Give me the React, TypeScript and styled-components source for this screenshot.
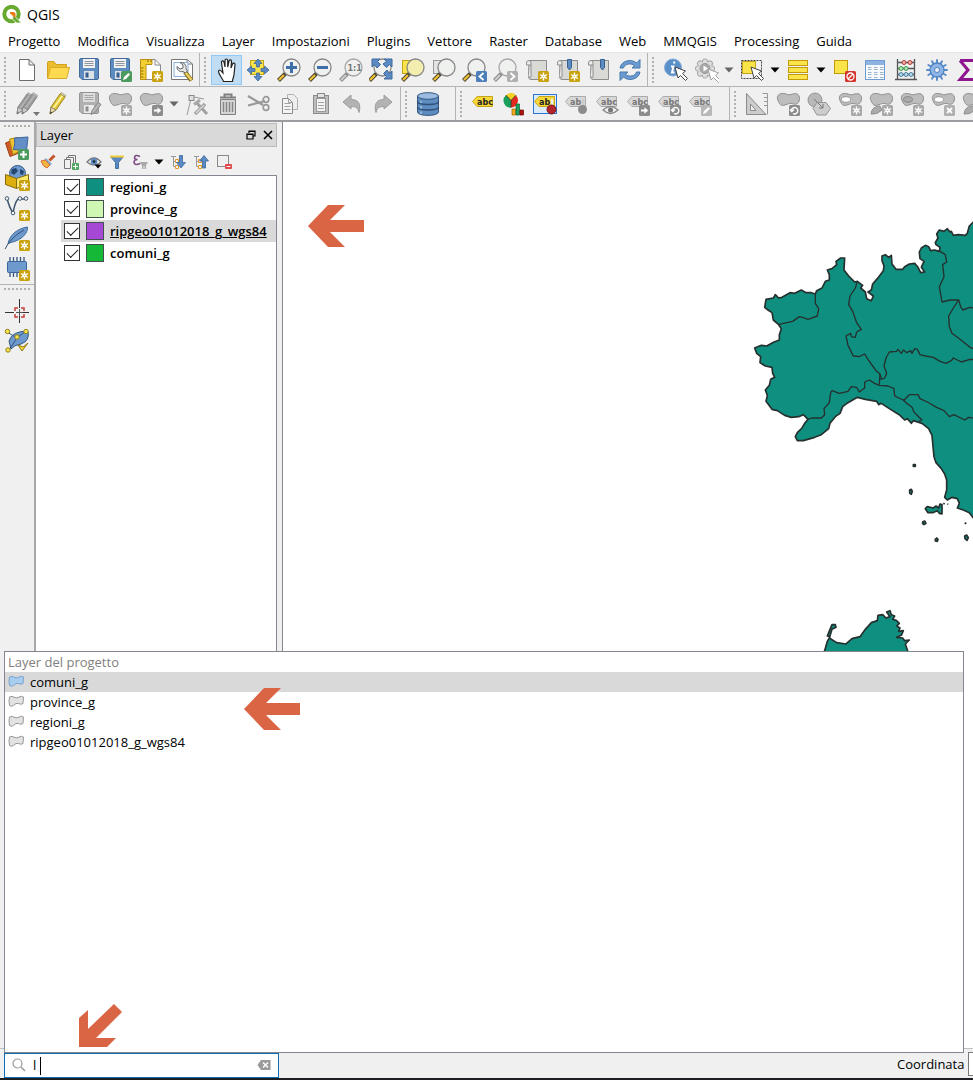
import React from "react";
import styled, { createGlobalStyle, css } from "styled-components";

const GlobalStyle = createGlobalStyle`
  * { box-sizing: border-box; }
  html, body { margin: 0; padding: 0; overflow: hidden; }
  body, button, input { font-family: "Open Sans", "Noto Sans", sans-serif; font-size: 13px; color: #000; }
  button { border: 0; padding: 0; margin: 0; background: none; }
  svg { display: block; flex: none; }
`;

const chrome = "#f0f0f0";
const line = "#b4b4b4";
const frame = "#828790";

const Window = styled.div`
  display: flex;
  flex-direction: column;
  height: 100vh;
  background: ${chrome};
  border-bottom: 2px solid #1e1e22;
`;

const TitleBar = styled.header`
  display: flex;
  align-items: center;
  gap: 5px;
  height: 30px;
  padding-left: 2px;
  background: #fff;
`;

const AppTitle = styled.h1`
  margin: 0;
  font-size: 14px;
  font-weight: 400;
  line-height: 18px;
`;

const MenuBar = styled.nav`
  display: flex;
  align-items: center;
  gap: 17px;
  height: 23px;
  padding-left: 8px;
  background: #fff;
  border-bottom: 1px solid #e6e6e6;
`;

const MenuButton = styled.button`
  line-height: 20px;
  white-space: nowrap;
`;

const ToolRow = styled.div<{ $last?: boolean }>`
  display: flex;
  flex: none;
  height: ${(p) => (p.$last ? 35 : 34)}px;
  overflow: hidden;
  border-bottom: ${(p) => (p.$last ? "2px solid #9c9ca0" : `1px solid ${line}`)};
`;

const ToolGroup = styled.div<{ $tail?: number }>`
  display: flex;
  flex: none;
  align-items: center;
  padding-right: ${(p) => p.$tail ?? 2}px;
  border-right: 1px solid ${line};
`;

const Grip = styled.span<{ $flat?: boolean }>`
  flex: none;
  ${(p) =>
    p.$flat
      ? css`
          width: 26px;
          height: 2px;
          margin: 3px 0 6px;
          background: repeating-linear-gradient(90deg, #b0b0b0 0 2px, transparent 2px 4px);
        `
      : css`
          width: 2px;
          height: 26px;
          margin: 0 5px 0 4px;
          background: repeating-linear-gradient(180deg, #b0b0b0 0 2px, transparent 2px 4px);
        `}
`;

const ToolButton = styled.button<{ $active?: boolean }>`
  display: flex;
  align-items: center;
  justify-content: center;
  flex: none;
  width: 31px;
  height: 30px;
  ${(p) => p.$active && "background: #c0dcf3; box-shadow: inset 0 0 0 1px #90c8f6;"}
`;

const ArrowButton = styled(ToolButton)`
  width: 15px;
`;

const Workspace = styled.main`
  display: flex;
  flex: 1;
  min-height: 0;
  border-bottom: 1px solid #c0c0c0;
`;

const SideBar = styled.aside`
  display: flex;
  flex-direction: column;
  align-items: center;
  flex: none;
  width: 36px;
  border-right: 2px solid #a8a8ac;
`;

const SideSection = styled.div`
  display: flex;
  flex-direction: column;
  align-items: center;
  width: 100%;
  padding-bottom: 1px;
  border-bottom: 1px solid ${line};
  &:last-child { border-bottom: 0; }
`;

const LayerPanel = styled.section`
  display: flex;
  flex-direction: column;
  flex: none;
  width: 241px;
  margin-right: 5px;
`;

const PanelTitle = styled.header`
  display: flex;
  align-items: center;
  height: 24px;
  margin-top: 1px;
  padding-left: 3px;
  background: #d9d9d9;
  border: 1px solid #bcbcbc;
`;

const PanelName = styled.h2`
  flex: 1;
  margin: 0;
  font-size: 13px;
  font-weight: 400;
`;

const PanelControl = styled.button`
  display: flex;
  justify-content: center;
  width: 17px;
`;

const PanelTools = styled.div`
  display: flex;
  align-items: center;
  height: 28px;
  padding-top: 1px;
`;

const SmallTool = styled.button<{ $narrow?: boolean }>`
  display: flex;
  justify-content: center;
  flex: none;
  width: ${(p) => (p.$narrow ? 15 : 23)}px;
`;

const LayerTree = styled.ul`
  flex: 1;
  margin: 0;
  padding: 0;
  list-style: none;
  background: #fff;
  border: solid ${frame};
  border-width: 1px 1px 0 0;
`;

const LayerRow = styled.li<{ $selected?: boolean }>`
  display: flex;
  align-items: center;
  height: 22px;
  margin-left: 25px;
  padding-left: 3px;
  background: ${(p) => (p.$selected ? "#d9d9d9" : "transparent")};
  text-decoration: ${(p) => (p.$selected ? "underline" : "none")};
`;

const LayerLabel = styled.label`
  display: flex;
  align-items: center;
  gap: 6px;
  font-size: 13px;
  font-weight: 600;
  white-space: nowrap;
`;

const Check = styled.input`
  appearance: none;
  flex: none;
  width: 16px;
  height: 16px;
  margin: 0;
  border: 1px solid #333;
  background: #fff;
  &:checked::after {
    content: "";
    display: block;
    width: 10px;
    height: 5px;
    margin: 3px 2px;
    border: solid #222;
    border-width: 0 0 1px 1px;
    transform: rotate(-45deg);
  }
`;

const Swatch = styled.span<{ $color: string }>`
  width: 18px;
  height: 18px;
  background: ${(p) => p.$color};
  border: 1px solid #44504e;
`;

const Canvas = styled.section`
  flex: 1;
  min-width: 0;
  overflow: hidden;
  background: #fff;
  border-left: 1px solid ${frame};
`;

const StatusBar = styled.footer`
  display: flex;
  align-items: center;
  justify-content: space-between;
  flex: none;
  height: 29px;
  padding-left: 4px;
`;

const Locator = styled.div`
  position: relative;
  display: flex;
  align-items: center;
  width: 275px;
  height: 25px;
  margin-top: 3px;
  padding: 0 7px;
  background: #fff;
  border: 1px solid #0f6cb6;
`;

const LocatorInput = styled.input`
  flex: 1;
  min-width: 0;
  height: 20px;
  padding: 0 0 0 7px;
  border: 0;
  outline: 0;
  background: transparent;
`;

const Caret = styled.span`
  position: absolute;
  left: 35px;
  top: 3px;
  width: 1px;
  height: 18px;
  background: #000;
`;

const Results = styled.div`
  position: absolute;
  left: -1px;
  bottom: 24px;
  width: calc(100vw - 13px);
  height: 402px;
  background: #fff;
  border: 1px solid ${frame};
`;

const ResultsTitle = styled.div`
  height: 20px;
  padding-left: 3px;
  line-height: 20px;
  color: #808080;
`;

const ResultRow = styled.button<{ $selected?: boolean }>`
  display: flex;
  align-items: center;
  gap: 6px;
  width: 100%;
  height: 20px;
  padding-left: 3px;
  line-height: 20px;
  background: ${(p) => (p.$selected ? "#d9d9d9" : "transparent")};
`;

const Pointer = styled.svg<{ $x: number; $y: number }>`
  position: absolute;
  left: ${(p) => p.$x}px;
  top: ${(p) => p.$y}px;
`;

const Coordinates = styled.label`
  display: flex;
  align-items: center;
  gap: 4px;
  width: 76px;
  overflow: hidden;
  white-space: nowrap;
`;

const CoordinateInput = styled.input`
  flex: none;
  width: 120px;
  height: 24px;
  border: 1px solid #7a7a7a;
  background: #fff;
`;

/* ---------- icon parts ---------- */

const G = "#8c8c8c";
const BLUE = "#5b8bc4";

const Icon = ({ children, size = 26, box = 26 }: { children: React.ReactNode; size?: number; box?: number }) => (
  <svg width={size} height={size} viewBox={`0 0 ${box} ${box}`} fill="none" aria-hidden="true">
    {children}
  </svg>
);

const Plate = ({ fill, x = 14, y = 14, children }: { fill: string; x?: number; y?: number; children?: React.ReactNode }) => (
  <g transform={`translate(${x} ${y})`}>
    <rect width="11" height="11" rx="1.5" fill={fill} />
    {children}
  </g>
);

const Star = ({ gray, x, y }: { gray?: boolean; x?: number; y?: number }) => (
  <Plate fill={gray ? "#a9a9a9" : "#c9a20e"} x={x} y={y}>
    <path d="M5.5 1.5v8M2 3.5l7 4M9 3.5l-7 4" stroke="#fff" strokeWidth="1.4" />
    <circle cx="5.5" cy="5.5" r="2" fill="#fff" />
    <circle cx="5.5" cy="5.5" r=".8" fill={gray ? "#ccc" : "#e8d27a"} />
  </Plate>
);

const Lens = ({ gray, x = 15.5, fill = "#eef1ee", children }: { gray?: boolean; x?: number; fill?: string; children?: React.ReactNode }) => (
  <>
    <path d={`M${x - 6} 16.500L${x - 13} 23.500`} stroke={gray ? "#8a8a8a" : "#4a4430"} strokeWidth="4" />
    <path d={`M${x - 7.5} 18L${x - 12.500} 23`} stroke={gray ? "#ccc" : "#f2c330"} strokeWidth="2.200" />
    <circle cx={x} cy="10.500" r="8.500" fill={fill} stroke={gray ? "#a5a5a5" : "#868686"} strokeWidth="1.300" />
    {children}
  </>
);

const Caretlet = ({ color = "#000" }: { color?: string }) => (
  <svg width="10" height="6" viewBox="0 0 10 6" aria-hidden="true">
    <path d="M0.500 0.500h9L5 5.500z" fill={color} />
  </svg>
);

const Floppy = ({ gray }: { gray?: boolean }) => (
  <>
    <path d="M3.500 3q0-1.500 1.500-1.500h16q1.500 0 1.500 1.500v18q0 1.500-1.500 1.500H6l-2.500-2.500z" fill={gray ? "#b0b0b0" : "#5d8cc0"} stroke={gray ? "#949494" : "#426a9a"} />
    <rect x="7" y="2" width="12" height="9" fill={gray ? "#ddd" : "#f2f2f2"} />
    <path d="M8.500 4.500h9M8.500 6.500h9M8.500 8.500h9" stroke={gray ? "#a8a8a8" : "#8b949c"} />
    <rect x="8" y="14" width="10" height="8" fill={gray ? "#ececec" : "#dce1e6"} />
    <rect x="9.500" y="15.500" width="3" height="5" fill={gray ? "#8e8e8e" : "#375f90"} />
  </>
);

const blob = "M3 9.500C1 5 4 2 8.500 2.500c4 .5 4.500 2 7.500 1 5-2 8.500-.5 8.500 4s-3 6.500-6 5.500c-3.500-1.500-5 0-8.500 1S5 14.500 3 9.500z";
const Blob = ({ fill = "#bdbdbd" }: { fill?: string }) => <path d={blob} fill={fill} stroke="#8f8f8f" />;

const Tag = ({ gray, text = "abc" }: { gray?: boolean; text?: string }) => (
  <>
    <path d="M2.500 10.500L7 5.500H22.500V15.500H7z" fill={gray ? "#d8d8d8" : "#f6d838"} stroke={gray ? "#aaa" : "#c6a417"} />
    <text x="7" y="13.500" fontSize="8" fontWeight="700" fontFamily="DejaVu Sans, sans-serif" fill={gray ? "#777" : "#222"}>
      {text}
    </text>
  </>
);

const Cursor = ({ gray, x = 13, y = 10 }: { gray?: boolean; x?: number; y?: number }) => (
  <path transform={`translate(${x} ${y})`} d="M0 0l3 11 2.500-2.500 5 5 2-2-5-5L10.500 4z" fill="#fff" stroke={gray ? "#a0a0a0" : "#444"} />
);

const Sheet = () => (
  <>
    <path d="M5 3.500H22.500V22.500H7q-2.500 0-2.500-3z" fill="#d9d9d6" stroke="#8d8d8d" />
    <path d="M5 3.500q-2.500 0-2.500 2.500v2H7V6q0-2.500-2-2.500M7 8v11q0 3.500-2.500 0" fill="#ededed" stroke="#8d8d8d" />
  </>
);

const PencilGlyph = ({ gray, dx = 0 }: { gray?: boolean; dx?: number }) => (
  <g transform={`translate(${dx} 0)`}>
    <path d="M6 16L15 3l5 3-9 13-6 4z" fill={gray ? "#999" : "#e0c42f"} stroke={gray ? "#8b8b8b" : "#9c8820"} />
    <path d="M8.500 17L17.500 4.500" stroke={gray ? "#b4b4b4" : "#fbf09a"} strokeWidth="2" />
    <path d="M6 16l5 3-6 4z" fill={gray ? "#ccc" : "#e8d6b0"} stroke={gray ? "#8b8b8b" : "#8d8262"} />
    <path d="M15 3l5 3 .8-1.500-4.500-3z" fill={gray ? "#bbb" : "#c9c9c9"} stroke={gray ? "#999" : "#9c8820"} strokeWidth=".6" />
    <path d="M5.500 20.500L5 23l2.200-1.400z" fill={gray ? "#777" : "#333"} />
  </g>
);

const Scroll = ({ plate }: { plate: string }) => (
  <Plate fill={plate}>
    <path d="M4 8.500A3.200 3.200 0 1 0 2.500 5M1 4.500l1.800 2 2.200-2" stroke="#fff" strokeWidth="1.400" />
  </Plate>
);

const ArrowPlate = () => (
  <Plate fill={G}>
    <path d="M2 4.500h3.500V2.200L9.200 5.500 5.500 8.800V6.500H2z" fill="#fff" />
  </Plate>
);

/* ---------- tool icons ---------- */

const icons: Record<string, React.ReactNode> = {
  newDoc: <path d="M5.500 2.500H15L20.500 8V23.500H5.500zM15 2.500V8H20.500" fill="#fff" stroke="#6b6b6b" />,
  open: (
    <>
      <path d="M2.500 21.500V5.500q0-1 1-1H9l2 3H21.500V12" fill="#e9bd2e" stroke="#d1a01c" />
      <path d="M2.500 21.500L5.500 10.500H24.500L21.500 21.500z" fill="#fdd94f" stroke="#d9ab26" />
    </>
  ),
  save: <Floppy />,
  saveAs: (
    <>
      <Floppy />
      <Plate fill="#4c9a5d">
        <path d="M2 9l1-3 4.500-4 1.500 1.500L5 8z" fill="#fff" />
      </Plate>
    </>
  ),
  newLayout: (
    <>
      <path d="M4.500 2.500H17L22.500 8V22.500H4.500z" fill="#fff" stroke="#8a8a8a" />
      <path d="M17 2.500V8h5.500" stroke="#8a8a8a" />
      <path d="M2.500 2.500H14V7.500H8V22.500H2.500z" fill="#f4cf32" stroke="#b98f12" />
      <path d="M3 11h2.500M3 14h2.500M3 17h2.500M3 20h2.500M10 3v2M13 3v2" stroke="#8a6a0b" />
      <Star />
    </>
  ),
  layouts: (
    <>
      <path d="M2.500 2.500H18L23.500 7V22.500H2.500z" fill="#fff" stroke="#777" />
      <path d="M18 2.500V7h5.500" stroke="#777" />
      <rect x="5" y="5.500" width="14" height="14" fill="#f8fbff" stroke="#8db0d8" />
      <path d="M16 15L22.500 23.500" stroke="#7d6914" strokeWidth="4.500" />
      <path d="M16 15L22.500 23" stroke="#e9cf62" strokeWidth="2.500" />
      <path d="M11 5.500l3 2.500v3l-3 1-3-2.500c-.5 3.500 3 6 6 5l2 1.500 2.500-2-1.500-2.500C18 8.500 15 5 11 5.500z" fill="#e4e4e4" stroke="#666" />
    </>
  ),
  hand: (
    <path
      d="M9.500 24.500C8 20.500 4.500 17 4.500 14.500c0-2 2.500-1.500 3.500.5L9 16 7.500 6c-.5-2.500 2-2.800 2.500-.8L11 10V3.500c0-2 2.600-2 2.700 0V10l1.300-6c.5-1.800 2.700-1.300 2.500.5L17 11l1.500-4c.6-1.600 2.800-1 2.500 1-.5 3.500-.5 6-1 9.500-.3 3-1.500 4.500-1.500 7z"
      fill="#fff"
      stroke="#222"
      strokeWidth="1.200"
    />
  ),
  panSel: (
    <>
      <rect x="5.500" y="3.500" width="13" height="14" fill="#fbe44a" stroke="#c6a417" />
      {[0, 90, 180, 270].map((a) => (
        <path key={a} transform={`rotate(${a} 13 13)`} d="M13 2l4 4.500h-2.500V10h-3V6.500H9z" fill={BLUE} stroke="#3c689c" strokeWidth=".8" />
      ))}
    </>
  ),
  zoomIn: (
    <Lens>
      <path d="M15.500 5v11M10 10.500h11" stroke="#3e6ea9" strokeWidth="3" />
    </Lens>
  ),
  zoomOut: (
    <Lens>
      <path d="M10 10.500h11" stroke="#3e6ea9" strokeWidth="3" />
    </Lens>
  ),
  zoomNative: (
    <Lens gray>
      <text x="9.500" y="13.500" fontSize="8" fontWeight="700" fontFamily="DejaVu Sans, sans-serif" fill="#777">
        1:1
      </text>
    </Lens>
  ),
  zoomFull: (
    <>
      <Lens x={13.5} />
      {[0, 90, 180].map((a) => (
        <path key={a} transform={`rotate(${a} 13 12)`} d="M3 2h8L8.500 4.500l3 3L8 11 5.500 7.500 3 10z" fill={BLUE} stroke="#3c689c" />
      ))}
    </>
  ),
  zoomSel: (
    <>
      <rect x="2.500" y="3.500" width="13" height="13" fill="#fbe44a" stroke="#c6a417" />
      <Lens fill="#f4edb0" />
    </>
  ),
  zoomLayer: (
    <>
      <rect x="2.500" y="3.500" width="13" height="13" fill="#e4e4e4" stroke="#999" />
      <Lens />
    </>
  ),
  zoomLast: (
    <>
      <Lens x={14.5} />
      <Plate fill="#4d7fb8">
        <path d="M7.500 2L3.500 5.500l4 3.500" stroke="#fff" strokeWidth="1.800" />
      </Plate>
    </>
  ),
  zoomNext: (
    <>
      <Lens gray x={14.5} />
      <Plate fill="#b0b0b0">
        <path d="M3.500 2l4 3.500-4 3.500" stroke="#fff" strokeWidth="1.800" />
      </Plate>
    </>
  ),
  newMap: (
    <>
      <Sheet />
      <Star />
    </>
  ),
  newBookmark: (
    <>
      <Sheet />
      <path d="M12.500 2.500h4v8l-2 2.500-2-2.500z" fill="#5d8cc0" stroke="#375f90" />
      <Star />
    </>
  ),
  bookmarks: (
    <>
      <Sheet />
      <path d="M14.500 2.500h4v8l-2 2.500-2-2.500z" fill="#5d8cc0" stroke="#375f90" />
    </>
  ),
  refresh: (
    <>
      <path d="M3 11C4 4 14 1 19.500 6L23 2.500V11h-8l2.500-2.500C13 5.500 8 7 6.500 11z" fill="#6c9bd1" stroke="#4678ae" />
      <path d="M23 15C22 22 12 25 6.500 20L3 23.500V15h8l-2.500 2.500C13 20.500 18 19 19.500 15z" fill="#6c9bd1" stroke="#4678ae" />
    </>
  ),
  identify: (
    <>
      <circle cx="11" cy="10.500" r="8.500" fill="#5b8fc9" stroke="#80a9d4" />
      <path d="M12.500 4.500l-.5 2M9 9.500h2.500L10 15.500h2.500" stroke="#fff" strokeWidth="2" />
      <Cursor />
    </>
  ),
  action: (
    <>
      {[0, 45, 90, 135].map((a) => (
        <rect key={a} transform={`rotate(${a} 12 11.500)`} x="9.500" y="2" width="5" height="19" rx="2" fill="#ddd" stroke="#a5a5a5" />
      ))}
      <circle cx="12" cy="11.500" r="7" fill="#ddd" />
      <circle cx="12" cy="11.500" r="5" fill="#aaa" stroke="#999" />
      <path d="M10.500 8.500v6l4.500-3z" fill="#fff" />
      <Cursor gray x={15} y={12} />
    </>
  ),
  select: (
    <>
      <rect x="2.500" y="3.500" width="20" height="18" stroke="#444" strokeDasharray="2 1" />
      <rect x="3.500" y="4.500" width="13" height="12" fill="#fbe44a" stroke="#c6a417" />
      <Cursor x={12} y={10} />
    </>
  ),
  selectForm: (
    <>
      {[3, 10, 17].map((y) => (
        <rect key={y} x="3.500" y={y + 0.5} width="19" height="5" fill="#fbe44a" stroke="#c29a0c" />
      ))}
    </>
  ),
  deselect: (
    <>
      <rect x="3.500" y="3.500" width="13" height="13" fill="#fbe44a" stroke="#c29a0c" />
      <Plate fill="#d5332c">
        <circle cx="5.500" cy="5.500" r="3.500" stroke="#fff" strokeWidth="1.300" />
        <path d="M3 8l5-5" stroke="#fff" strokeWidth="1.300" />
      </Plate>
    </>
  ),
  table: (
    <>
      <rect x="3.500" y="3.500" width="19" height="19" fill="#f6fafe" stroke="#6c9bd1" />
      <rect x="4" y="4" width="18" height="4" fill="#8db4e0" />
      {[6, 12, 18].map((x) => (
        <path key={x} d={`M${x} 10.500h3.500M${x} 12.500h3.500M${x} 15.500h3.500M${x} 17.500h3.500M${x} 20.500h3.500`} stroke="#9cb3ca" />
      ))}
    </>
  ),
  abacus: (
    <>
      <path d="M4.500 2v21M21.500 2v21M4 5.500h18M4 11.500h18M4 17.500h18M2 22.500h22" stroke="#555" strokeWidth="1.300" />
      <g fill="#f6b0a8" stroke="#b03a30">
        <circle cx="11" cy="5.500" r="2" />
        <circle cx="17" cy="5.500" r="2" />
      </g>
      <g fill="#b2e6b8" stroke="#3a9b4a">
        <circle cx="8" cy="11.500" r="2" />
        <circle cx="13" cy="11.500" r="2" />
      </g>
      <g fill="#b8d7e8" stroke="#4581a5">
        <circle cx="8" cy="17.500" r="2" />
        <circle cx="13" cy="17.500" r="2" />
        <circle cx="18" cy="17.500" r="2" />
      </g>
    </>
  ),
  gear: (
    <>
      {[0, 30, 60, 90, 120, 150].map((a) => (
        <rect key={a} transform={`rotate(${a} 13 13)`} x="12" y="2" width="2" height="22" rx="1" fill="#5b8ccc" />
      ))}
      <circle cx="13" cy="13" r="7" fill="#8db4e4" stroke="#4f83c2" strokeWidth="1.300" />
      <circle cx="13" cy="13" r="2.500" fill={chrome} stroke="#4f83c2" />
    </>
  ),
  sigma: <path d="M5 3.500H22V8M22 18v4.500H5l8-9.500-8-9.500" stroke="#8e168e" strokeWidth="3" />,
  edits: (
    <>
      <PencilGlyph gray dx={-2} />
      <PencilGlyph gray dx={3} />
      <path d="M19 21h7l-3.500 4z" fill="#777" />
    </>
  ),
  pencil: <PencilGlyph />,
  saveEdits: (
    <>
      <Floppy gray />
      <path d="M15 23.500l1-4 6-8 3 2-6 8z" fill="#b5b5b5" stroke="#888" />
    </>
  ),
  addFeature: (
    <>
      <Blob />
      <Star gray />
    </>
  ),
  moveFeature: (
    <>
      <Blob />
      <ArrowPlate />
    </>
  ),
  vertex: (
    <>
      <path d="M3 24L7.500 5.500L20 8" stroke="#999" />
      <rect x="5" y="4.500" width="5" height="5" fill="#ddd" stroke="#888" />
      <path d="M12 11l11 12" stroke="#a0a0a0" strokeWidth="3" />
      <path d="M21 13L11 23" stroke="#a0a0a0" strokeWidth="3.500" />
      <path d="M20 14L12 22" stroke="#d8d8d8" strokeWidth="1.500" />
      <path d="M10 13.500L16 9" stroke="#a8a8a8" strokeWidth="3" />
    </>
  ),
  trash: (
    <>
      <path d="M5.500 8.500h15v15h-15z" fill="#d5d5d5" stroke="#7f7f7f" />
      <path d="M8.500 11v10M11.500 11v10M14.500 11v10M17.500 11v10" stroke="#858585" strokeWidth="1.400" />
      <path d="M5 6.500h16M9.500 6V3.500h7V6" stroke="#7f7f7f" strokeWidth="2" />
    </>
  ),
  cut: (
    <>
      <path d="M2 5l15 9M2 14.500L19 10" stroke="#999" strokeWidth="2.200" />
      <circle cx="20" cy="8.500" r="2.800" stroke="#999" strokeWidth="1.700" />
      <circle cx="20" cy="16.500" r="2.800" stroke="#999" strokeWidth="1.700" />
    </>
  ),
  copy: (
    <>
      <path d="M10.500 3.500h6l4 4v11h-10z" fill="#eee" stroke="#b0b0b0" />
      <path d="M5.500 7.500h6l4 4v11h-10z" fill="#f4f4f4" stroke="#8b8b8b" />
      <path d="M7.500 12.500h6M7.500 15.500h6M7.500 18.500h6M11.500 7.500v4h4" stroke="#a2a2a2" />
    </>
  ),
  paste: (
    <>
      <rect x="5.500" y="4.500" width="15" height="18" fill="#bebebe" stroke="#8b8b8b" />
      <rect x="8.500" y="7.500" width="9" height="13" fill="#f4f4f4" stroke="#999" />
      <path d="M10 11.500h6M10 14.500h6M10 17.500h6" stroke="#a2a2a2" />
      <rect x="9.500" y="2.500" width="7" height="4" fill="#e2e2e2" stroke="#8b8b8b" />
    </>
  ),
  undo: <path d="M4 11l8-7v4.500c7 0 10.500 4 8 13-1-4.500-3-6-8-6V18z" fill="#b3b3b3" stroke="#9c9c9c" />,
  redo: <path d="M22 11l-8-7v4.500c-7 0-10.500 4-8 13 1-4.500 3-6 8-6V18z" fill="#b3b3b3" stroke="#9c9c9c" />,
  db: (
    <>
      <path d="M2.500 5v16c0 4.500 21 4.500 21 0V5z" fill="#5d8cc0" stroke="#34567f" />
      <ellipse cx="13" cy="5" rx="10.500" ry="3.300" fill="#9bbce0" stroke="#34567f" />
      <path d="M2.500 10.500c0 4 21 4 21 0M2.500 16c0 4 21 4 21 0" stroke="#2f4f77" strokeWidth="1.500" />
      <path d="M6 10v2M6 15v2.500M6 20.500V23" stroke="#91b3da" strokeWidth="2" />
    </>
  ),
  label: <Tag />,
  diagram: (
    <>
      <circle cx="10" cy="9.500" r="7" fill="#e22a20" />
      <path d="M10 9.500L5 4.200A7 7 0 0 0 10 16.500z" fill="#19a05c" />
      <path d="M10 9.500L5 4.200A7 7 0 0 1 15 4.200z" fill="#f2d324" />
      <path d="M10 9.500V16.500M10 9.500L5 4.200M10 9.500l5-5.300" stroke="#333" strokeWidth=".8" />
      <path d="M11 18h3.500v6H11z" fill="#f2a81c" stroke="#a26b00" strokeWidth=".7" />
      <path d="M15 13h3.500v11H15z" fill="#19a05c" stroke="#0b5e33" strokeWidth=".7" />
      <path d="M19 19h3.500v5H19z" fill="#b01712" stroke="#700" strokeWidth=".7" />
    </>
  ),
  pinHighlight: (
    <>
      <rect x="1.500" y="3.500" width="23" height="19" fill="#dcebf8" stroke="#2b78d4" />
      <Tag text="ab" />
      <path d="M20 8v9" stroke="#eee" strokeWidth="2.500" />
      <circle cx="19.500" cy="18.500" r="4.500" fill="#b3242b" stroke="#7c1218" />
    </>
  ),
  pin: (
    <>
      <Tag gray text="ab" />
      <path d="M20 8v9" stroke="#ccc" strokeWidth="2.500" />
      <circle cx="19.500" cy="18.500" r="4.500" fill="#8c8c8c" />
    </>
  ),
  showLabel: (
    <>
      <Tag gray />
      <path d="M9 19q7.500-7 15 0-7.500 7-15 0z" fill="#eee" stroke="#888" strokeWidth="1.300" />
      <circle cx="16.500" cy="19" r="2.500" fill="#777" />
    </>
  ),
  moveLabel: (
    <>
      <Tag gray />
      <ArrowPlate />
    </>
  ),
  rotateLabel: (
    <>
      <Tag gray />
      <Scroll plate={G} />
    </>
  ),
  changeLabel: (
    <>
      <Tag gray />
      <Plate fill="#b8b8b8">
        <path d="M2 9l1-3 4.500-4 1.500 1.500L5 8z" fill="#fff" />
      </Plate>
    </>
  ),
  cad: (
    <>
      <path d="M2.500 2.500L22 23.500H2.500z" fill="#ccc" stroke="#8b8b8b" />
      <path d="M6.500 13v6.500H12z" fill={chrome} stroke="#8b8b8b" />
      <path d="M18.500 2.500h5v21" stroke="#999" />
      <path d="M20 6.500h3M20 10.500h3M20 14.500h3" stroke="#999" />
    </>
  ),
  rotateFeature: (
    <>
      <Blob />
      <Scroll plate={G} />
    </>
  ),
  simplify: (
    <>
      <circle cx="9" cy="9" r="7" fill="#b8b8b8" stroke="#969696" />
      <path d="M11 11.500h9l4.500 6-4.500 6.500h-9L7 17.500z" fill="#cdcdcd" stroke="#969696" />
      <path d="M8 8l9 9m0-4v4h-4" stroke="#777" />
    </>
  ),
  addRing: (
    <>
      <Blob />
      <ellipse cx="9" cy="8.500" rx="4.500" ry="2.800" fill="#fff" stroke="#999" />
      <Star gray />
    </>
  ),
  addPart: (
    <>
      <Blob />
      <path d="M3 23q1-8 9-8l2 4q-5 5-11 4z" fill="#ababab" stroke="#8f8f8f" />
      <Star gray />
    </>
  ),
  fillRing: (
    <>
      <Blob />
      <ellipse cx="9" cy="8.500" rx="4.500" ry="2.800" fill="#aaa" stroke="#888" />
      <Star gray />
    </>
  ),
  deleteRing: (
    <>
      <Blob />
      <ellipse cx="9" cy="8.500" rx="4.500" ry="2.800" fill="#fff" stroke="#999" />
      <Plate fill="#b0b0b0">
        <path d="M3 3l5 5M8 3L3 8" stroke="#fff" strokeWidth="1.800" />
      </Plate>
    </>
  ),
  deletePart: (
    <>
      <Blob />
      <path d="M3 23q1-8 9-8l2 4q-5 5-11 4z" fill="#ababab" stroke="#8f8f8f" />
    </>
  ),
  dataSource: (
    <>
      <path d="M1.500 8L10 4.500L15 18 6 21.500z" fill="#cf5b28" stroke="#9c3f14" />
      <path d="M5.500 4L14 2.500L18 15l-9 4.500z" fill="#f0c430" stroke="#b48a10" />
      <path d="M10.500 3L24 2 22.500 15.500 9.500 14.500q2-6 1-11.500z" fill="#648fc6" stroke="#3d669c" />
      <Plate fill="#4c9a5d">
        <path d="M5.500 2v7M2 5.500h7" stroke="#fff" strokeWidth="2" />
      </Plate>
    </>
  ),
  geopackage: (
    <>
      <circle cx="13.500" cy="8.500" r="8" fill="#6f9bd0" stroke="#34567f" />
      <path d="M8 4l4-1 2 3-4 4-3-2zM16 4l4 2-1 4-3-1z" fill="#26476f" />
      <path d="M1.500 9.500l11 4v10l-11-4z" fill="#dcae10" stroke="#8a6a0b" />
      <path d="M12.500 13.500l12-4v9l-12 5z" fill="#fbe86a" stroke="#8a6a0b" />
      <Star x={15} y={15} />
    </>
  ),
  shapefile: (
    <>
      <path d="M3 3q2 9 6 15 2-11 5-14h8" stroke="#3f566e" strokeWidth="1.500" />
      <g fill="#fff" stroke="#3f566e">
        <circle cx="3" cy="3.500" r="1.800" />
        <circle cx="9" cy="18" r="1.800" />
        <circle cx="16" cy="3.500" r="1.800" />
        <circle cx="22" cy="3.500" r="1.800" />
      </g>
      <Star x={15} y={15} />
    </>
  ),
  feather: (
    <>
      <path d="M4 18.500C6 9 14 3.500 23.500 2 24 8 18 15 7 17.500z" fill="#6d99cc" stroke="#3f6a9e" />
      <path d="M1 24Q7 12 20 5" stroke="#2f4f77" />
      <Star x={15} y={15} />
    </>
  ),
  memory: (
    <>
      <path d="M6 2v20M9.500 2v20M13 2v20M16.500 2v20M20 2v20" stroke="#34567f" strokeWidth="1.300" />
      <rect x="3.500" y="6.500" width="19" height="11" rx="1" fill="#6d99cc" stroke="#3d669c" />
      <Star x={15} y={15} />
    </>
  ),
  crosshair: (
    <>
      <path d="M15.500 1v9M15.500 17v8M1 14.500h9M19 14.500h6" stroke="#333" />
      <path d="M11 13v-3h3M17 10h3v3M20 16v3h-3M14 19h-3v-3" stroke="#c2403c" strokeWidth="1.500" />
      <path d="M12 14.500h7M15.500 11v7" stroke="#555" />
    </>
  ),
  topology: (
    <>
      <path d="M5 13q3-10 19-10 2 10-7 13-7 1-10 5z" fill="#6d99cc" stroke="#34567f" />
      <path d="M3 4l10 6L5 22M13 10l9-7" stroke="#34567f" />
      <g fill="#fbe44a" stroke="#8f8020">
        <circle cx="3.500" cy="3.500" r="2.200" />
        <circle cx="22" cy="3.500" r="2.200" />
        <circle cx="13" cy="9" r="2.200" />
        <circle cx="4" cy="22" r="2.200" />
      </g>
      <path d="M14 17l4 6 6-8-5 4z" fill="#f6d838" stroke="#8f7a10" />
    </>
  ),
};

const smallIcons: Record<string, React.ReactNode> = {
  style: (
    <>
      <path d="M9.500 6.500L14.500 1.500" stroke="#c3572c" strokeWidth="3" />
      <path d="M6 4l6 6-2 1.500-6-5z" fill="#8aa9cf" />
      <path d="M1 7l4-1 5 5-3 3q-4-1-6-7z" fill="#f1b541" stroke="#dd6b35" />
    </>
  ),
  group: (
    <>
      <path d="M5.500 3.500V1.500h7v11h-2M3.500 5.500v-2h7v11M1.500 5.500h6v9h-6z" stroke="#777" />
      <rect x="9" y="9" width="7" height="7" rx="1" fill="#53a566" />
      <path d="M12.500 10v5M10 12.500h5" stroke="#fff" />
    </>
  ),
  eye: (
    <>
      <path d="M1 8q7-8 14 0-7 6-14 0z" fill="#eee" stroke="#777" strokeWidth="1.300" />
      <circle cx="8" cy="7.500" r="3.300" fill="#5b8bc4" />
      <circle cx="8" cy="7.500" r="1.300" fill="#222" />
      <path d="M8.500 10.500h7L12 14.500z" fill="#000" />
    </>
  ),
  filter: (
    <>
      <path d="M1.500 2.500h13L9.500 8.500v6h-3v-6z" fill="#5b8bc4" stroke="#45719f" />
      <path d="M1 1.500h14v2H1z" fill="#f3cc37" />
    </>
  ),
  expression: (
    <>
      <path d="M8 2.500Q3 0 2.500 3.500q0 2 3 2Q2 5.500 2 8.500 3 12 8 9.500" stroke="#7d4a84" strokeWidth="1.600" />
      <path d="M8 8h7.500v1.500L14 11v4h-1.500v-3h-1v3H10v-4L8 9.500z" fill="#a9a9a9" />
    </>
  ),
  expand: (
    <>
      <path d="M1 2.500h5M3.500 2.500v10H6M3.500 7.500H6" stroke="#999" />
      <path d="M5.500 5.500h3v3h-3zM5.500 11.500h3v3h-3z" stroke="#e79a28" />
      <path d="M9.500 1.500h3v7h3L11 14 6.500 8.500h3z" fill="#5b8bc4" stroke="#3c689c" strokeWidth=".8" />
    </>
  ),
  collapse: (
    <>
      <path d="M1 2.500h5M3.500 2.500v10H6M3.500 7.500H6" stroke="#999" />
      <path d="M5.500 5.500h3v3h-3zM5.500 11.500h3v3h-3z" stroke="#e79a28" />
      <path d="M9.500 14h3V7h3L11 1.500 6.500 7h3z" fill="#5b8bc4" stroke="#3c689c" strokeWidth=".8" />
    </>
  ),
  remove: (
    <>
      <rect x="1.500" y="1.500" width="11" height="11" stroke="#888" />
      <rect x="9" y="10" width="7" height="5" rx="1" fill="#e2494a" />
      <path d="M10.500 12.500h4" stroke="#fff" />
    </>
  ),
};

/* ---------- data ---------- */

type Tool = { id: string; title: string; active?: boolean } | { drop: string };
const t = (id: string, title: string, active?: boolean): Tool => ({ id, title, active });

const topGroups: { tail?: number; tools: Tool[] }[] = [
  { tools: [t("newDoc", "Nuovo"), t("open", "Apri"), t("save", "Salva"), t("saveAs", "Salva come"), t("newLayout", "Nuovo layout"), t("layouts", "Gestore layout")] },
  {
    tools: [
      t("hand", "Sposta mappa", true), t("panSel", "Sposta su selezione"), t("zoomIn", "Ingrandisci"), t("zoomOut", "Rimpicciolisci"),
      t("zoomNative", "Risoluzione nativa"), t("zoomFull", "Zoom completo"), t("zoomSel", "Zoom selezione"), t("zoomLayer", "Zoom layer"),
      t("zoomLast", "Zoom precedente"), t("zoomNext", "Zoom successivo"), t("newMap", "Nuova mappa"), t("newBookmark", "Nuovo segnalibro"),
      t("bookmarks", "Segnalibri"), t("refresh", "Aggiorna"),
    ],
  },
  {
    tools: [
      t("identify", "Informazioni"), t("action", "Azione"), { drop: "#666" }, t("select", "Seleziona"), { drop: "#000" },
      t("selectForm", "Seleziona per valore"), { drop: "#000" }, t("deselect", "Deseleziona"), t("table", "Tabella attributi"),
      t("abacus", "Calcolatore"), t("gear", "Strumenti"), t("sigma", "Statistiche"),
    ],
  },
];

const editGroups: { tail?: number; tools: Tool[] }[] = [
  {
    tools: [
      t("edits", "Modifiche"), t("pencil", "Attiva modifica"), t("saveEdits", "Salva modifiche"), t("addFeature", "Aggiungi"),
      t("moveFeature", "Sposta"), { drop: "#666" }, t("vertex", "Vertici"), t("trash", "Elimina"), t("cut", "Taglia"),
      t("copy", "Copia"), t("paste", "Incolla"), t("undo", "Annulla"), t("redo", "Ripeti"),
    ],
  },
  { tail: 12, tools: [t("db", "Database")] },
  {
    tail: 14,
    tools: [
      t("label", "Etichette"), t("diagram", "Diagrammi"), t("pinHighlight", "Evidenzia"), t("pin", "Fissa"), t("showLabel", "Mostra"),
      t("moveLabel", "Sposta etichetta"), t("rotateLabel", "Ruota etichetta"), t("changeLabel", "Cambia etichetta"),
    ],
  },
  {
    tools: [
      t("cad", "CAD"), t("rotateFeature", "Ruota"), t("simplify", "Semplifica"), t("addRing", "Aggiungi anello"), t("addPart", "Aggiungi parte"),
      t("fillRing", "Riempi anello"), t("deleteRing", "Elimina anello"), t("deletePart", "Elimina parte"),
    ],
  },
];

const menus = ["Progetto", "Modifica", "Visualizza", "Layer", "Impostazioni", "Plugins", "Vettore", "Raster", "Database", "Web", "MMQGIS", "Processing", "Guida"];

const layers = [
  { name: "regioni_g", color: "#0e8f80" },
  { name: "province_g", color: "#cff7b4" },
  { name: "ripgeo01012018_g_wgs84", color: "#a548d6", selected: true },
  { name: "comuni_g", color: "#15b937" },
];

const results = ["comuni_g", "province_g", "regioni_g", "ripgeo01012018_g_wgs84"];

const mainland =
  "M720 30L700 36L688 48L682 70L676 76L655 74L640 76L634 64L630 66L622 56L612 64L598 60L590 72L594 84L586 98L588 104L600 112L598 124L584 120L572 122L566 110L556 106L544 114L538 126L540 146L552 154L544 172L554 186L542 188L534 172L524 160L508 162L494 170L488 178L468 178L456 162L454 136L446 142L436 134L426 138L426 152L432 168L430 182L412 206L398 222L394 240L384 246L400 258L394 272L380 266L376 246L362 234L368 226L352 214L344 216L326 198L312 180L314 144L302 144L288 154L290 164L276 176L262 180L268 194L268 210L256 214L246 234L230 242L226 252L214 248L198 248L184 240L164 250L150 248L126 262L116 264L106 254L100 264L78 268L74 292L84 300L96 308L100 330L116 344L124 356L118 374L118 390L102 396L80 408L64 406L44 414L50 430L62 440L60 458L76 468L96 472L98 490L104 502L92 508L88 526L76 540L82 556L78 574L96 598L112 602L134 616L154 622L176 620L190 614L196 620L204 628L194 640L186 654L172 668L166 680L172 692L190 692L224 682L244 674L266 656L270 640L286 620L300 610L308 590L324 578L352 562L376 568L410 574L416 584L424 580L448 596L480 616L494 630L502 626L514 640L520 632L546 640L566 656L576 676L580 720L582 740L588 758L604 776L614 792L620 810L620 840L614 862L622 870L636 862L652 866L658 880L652 894L670 900L688 908L700 924L720 940z";

const borders = [
  "M226 252L226 280L236 296L232 318L204 328L188 322L178 320L158 334L130 340L116 344",
  "M352 214L346 234L330 258L326 284L338 304L350 338L364 358L350 366L346 382L334 380L332 370L318 378L324 406L340 438L358 440L374 432L384 448L398 468L410 484L420 492L418 524",
  "M204 628L214 624L244 624L254 614L252 596L268 578L272 548L276 542L298 550L324 544L334 530L350 532L358 546L374 534L374 516L388 510L404 520L418 526L444 528L462 536L464 558L490 570L500 580L516 592L522 606L536 620L546 630L536 634",
  "M420 492L424 508L434 504L440 490L432 468L438 444L448 426L470 424L474 418L484 430L490 420L500 428L512 422L516 430L524 416L532 418L540 434L556 438L580 442L600 454L618 460L634 452L640 444L664 456L690 448L720 450",
  "M490 572L508 554L534 554L540 566L562 576L590 592L612 602L628 620L642 614L674 630L686 622L720 628",
  "M600 124L616 134L620 156L608 164L612 200L598 230L606 276L630 270L656 270L662 290L668 300L690 292L720 298",
  "M656 270L640 294L626 318L628 350L636 370L660 388L690 412L720 424",
];

const islands = [
  "M556 896L562 890L580 894L588 888L596 894L600 882L606 884L606 912L598 910L592 902L578 908L564 908z",
  "M520 764h6v5h-6zM509 840l5-2 3 6-3 9-5-4zM548 936l6-3 4 7-6 4-4-3zM586 988l4-4 4 4-2 6-6-1zM674 978l6-3 5 8-4 8-6-5zM674 938l5 3M610 880l4 2M622 882l3 1",
  "M240 1350L254 1322L262 1294L270 1280L262 1278L270 1258L276 1244L286 1244L288 1252L276 1258L268 1284L290 1298L318 1302L336 1286L360 1280L376 1258L394 1238L412 1232L414 1216L428 1214L438 1224L450 1220L440 1206L450 1202L454 1214L464 1218L458 1228L470 1232L478 1240L470 1248L480 1254L476 1264L490 1262L484 1276L470 1282L488 1284L494 1292L508 1290L496 1302L504 1326L510 1350z",
];

/* ---------- pieces ---------- */

const Tools = ({ groups, last }: { groups: { tail?: number; tools: Tool[] }[]; last?: boolean }) => (
  <ToolRow $last={last} role="toolbar">
    {groups.map((g, i) => (
      <ToolGroup key={i} $tail={g.tail}>
        <Grip />
        {g.tools.map((tool, j) =>
          "drop" in tool ? (
            <ArrowButton key={j} aria-label="Altre opzioni">
              <Caretlet color={tool.drop} />
            </ArrowButton>
          ) : (
            <ToolButton key={j} aria-label={tool.title} $active={tool.active}>
              <Icon>{icons[tool.id]}</Icon>
            </ToolButton>
          )
        )}
      </ToolGroup>
    ))}
  </ToolRow>
);

const Small = ({ id, title }: { id: string; title: string }) => (
  <SmallTool aria-label={title}>
    <Icon size={16} box={16}>{smallIcons[id]}</Icon>
  </SmallTool>
);

const leftArrow = "M0 21L20 0H37L22 15H56V27H22L37 42H20z";

export default function App() {
  return (
    <>
      <GlobalStyle />
      <Window>
        <TitleBar>
          <Icon size={20} box={20}>
            <circle cx="9.500" cy="9" r="7.200" stroke="#69a92f" strokeWidth="4" />
            <path d="M11 9.500l8.500 8.500h-5L10.500 14z" fill="#69a92f" stroke="#fff" strokeWidth=".8" />
            <path d="M8 7h4l1.500 1.500v4.500L8 8.500z" fill="#ee7913" />
          </Icon>
          <AppTitle>QGIS</AppTitle>
        </TitleBar>
        <MenuBar>
          {menus.map((m) => (
            <MenuButton key={m}>{m}</MenuButton>
          ))}
        </MenuBar>
        <Tools groups={topGroups} />
        <Tools groups={editGroups} last />

        <Workspace>
          <SideBar>
            <SideSection>
              <Grip $flat />
              {["dataSource", "geopackage", "shapefile", "feather", "memory"].map((id) => (
                <ToolButton key={id} aria-label={id}>
                  <Icon>{icons[id]}</Icon>
                </ToolButton>
              ))}
            </SideSection>
            <SideSection>
              <Grip $flat />
              {["crosshair", "topology"].map((id) => (
                <ToolButton key={id} aria-label={id}>
                  <Icon>{icons[id]}</Icon>
                </ToolButton>
              ))}
            </SideSection>
          </SideBar>

          <LayerPanel>
            <PanelTitle>
              <PanelName>Layer</PanelName>
              <PanelControl aria-label="Sgancia">
                <Icon size={10} box={10}>
                  <path d="M3 3V1h6v5H7M3 1.500h6" stroke="#000" strokeWidth="1.200" />
                  <path d="M1 4h6v5H1zM1 4.500h6" stroke="#000" strokeWidth="1.200" />
                </Icon>
              </PanelControl>
              <PanelControl aria-label="Chiudi">
                <Icon size={10} box={10}>
                  <path d="M1 1l8 8M9 1L1 9" stroke="#000" strokeWidth="1.600" />
                </Icon>
              </PanelControl>
            </PanelTitle>
            <PanelTools>
              <Small id="style" title="Stile" />
              <Small id="group" title="Aggiungi gruppo" />
              <Small id="eye" title="Visibilità" />
              <Small id="filter" title="Filtro" />
              <Small id="expression" title="Espressione" />
              <SmallTool $narrow aria-label="Altre opzioni">
                <Caretlet />
              </SmallTool>
              <Small id="expand" title="Espandi" />
              <Small id="collapse" title="Contrai" />
              <Small id="remove" title="Rimuovi" />
            </PanelTools>
            <LayerTree>
              {layers.map((l) => (
                <LayerRow key={l.name} $selected={l.selected}>
                  <LayerLabel>
                    <Check type="checkbox" defaultChecked />
                    <Swatch $color={l.color} />
                    {l.name}
                  </LayerLabel>
                </LayerRow>
              ))}
            </LayerTree>
          </LayerPanel>

          <Canvas aria-label="Mappa">
            <svg width="690" height="550" viewBox="0 0 690 550">
              <path d={leftArrow} transform="translate(25 83)" fill="#d96544" />
              <g transform="translate(457 88) scale(.33333)" fill="#0e8f80" stroke="#26302e" strokeWidth="5" strokeLinejoin="round">
                <path d={mainland} />
                {islands.map((d) => (
                  <path key={d} d={d} />
                ))}
                {borders.map((d) => (
                  <path key={d} d={d} fill="none" strokeWidth="4" />
                ))}
              </g>
            </svg>
          </Canvas>
        </Workspace>

        <StatusBar>
          <Locator>
            <Icon size={14} box={14}>
              <circle cx="5.500" cy="5.500" r="4.500" stroke="#9a9a9a" strokeWidth="1.200" />
              <path d="M9 9l4 4" stroke="#9a9a9a" strokeWidth="1.600" />
            </Icon>
            <LocatorInput aria-label="Cerca" defaultValue="l" />
            <Caret />
            <button aria-label="Cancella">
              <svg width="14" height="12" viewBox="0 0 14 12" aria-hidden="true">
                <path d="M4 1h9.500v10H4L.5 6z" fill="#9a9a9a" />
                <path d="M6 3.500l5 5M11 3.500l-5 5" stroke="#fff" strokeWidth="1.500" />
              </svg>
            </button>
            <Results>
              <ResultsTitle>Layer del progetto</ResultsTitle>
              {results.map((r, i) => (
                <ResultRow key={r} $selected={i === 0}>
                  <svg width="16" height="14" viewBox="0 0 16 14" aria-hidden="true">
                    <path
                      d="M1.500 2Q4 .5 7 2.500Q9 3.500 11 2Q14 .5 15.500 2L15 8.500Q13 10 10.500 8.500Q8 7.500 5.500 10.500Q3 12 1.500 10.500Q.5 6 1.500 2z"
                      fill={i === 0 ? "#a9cdf0" : "#e2e2e2"}
                      stroke={i === 0 ? "#7aa2cb" : "#999"}
                    />
                  </svg>
                  {r}
                </ResultRow>
              ))}
              <Pointer $x={239} $y={36} width="56" height="42" viewBox="0 0 56 42">
                <path d={leftArrow} fill="#d96544" />
              </Pointer>
              <Pointer $x={74} $y={351} width="44" height="44" viewBox="0 0 44 44">
                <path d="M0 44V15L9 7V26L35 1L43 9L17 35H37L28 44z" fill="#d96544" />
              </Pointer>
            </Results>
          </Locator>
          <Coordinates>
            Coordinata
            <CoordinateInput aria-label="Coordinata" />
          </Coordinates>
        </StatusBar>
      </Window>
    </>
  );
}
